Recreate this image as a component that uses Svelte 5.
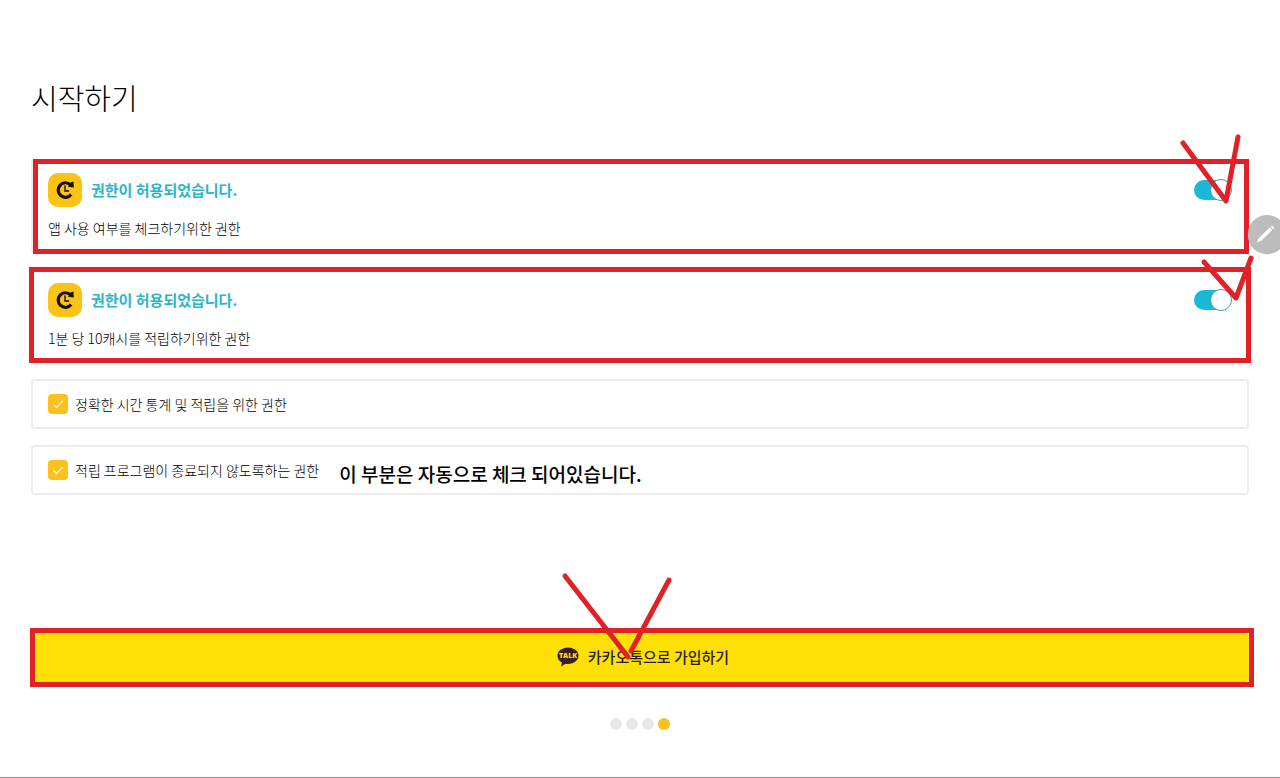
<script>
  let permissions = $state([
    { id: 'usage', text: '앱 사용 여부를 체크하기위한 권한', on: true, tick: 'M4 7 L47 65 L59 1' },
    { id: 'cash', text: '1분 당 10캐시를 적립하기위한 권한', on: true, tick: 'M4 5 L36 41 L51 1' },
  ]);
  let agreements = $state([
    { id: 'stats', text: '정확한 시간 통계 및 적립을 위한 권한', checked: true, note: '' },
    {
      id: 'running',
      text: '적립 프로그램이 종료되지 않도록하는 권한',
      checked: true,
      note: '이 부분은 자동으로 체크 되어있습니다.',
    },
  ]);
  const steps = [1, 2, 3, 4];
  const current = 4;
</script>

<div class="page">
  <main>
    <h1>시작하기</h1>

    {#each permissions as p (p.id)}
      <section class="card permission {p.id}">
        <div class="row">
          <svg class="app-icon" viewBox="0 0 34 34" aria-hidden="true">
            <rect width="34" height="34" rx="10" fill="#fbc316" />
            <path
              d="M22.6 11.8 A7.3 7.3 0 1 0 23.2 21.6"
              fill="none"
              stroke="#160f08"
              stroke-width="3.2"
            />
            <path d="M20 13.8 L25.8 14.4 L25.4 8.4 L22.6 9.4 Z" fill="#160f08" />
            <path d="M17 12.6 V18 H21.2" fill="none" stroke="#160f08" stroke-width="1.4" />
          </svg>
          <label class="status" for={p.id}>권한이 허용되었습니다.</label>
          <input class="switch" type="checkbox" role="switch" id={p.id} bind:checked={p.on} />
        </div>
        <p>{p.text}</p>
        <span class="frame"></span>
        <svg class="tick" aria-hidden="true"><path d={p.tick} /></svg>
      </section>
    {/each}

    {#each agreements as a (a.id)}
      <div class="card agreement">
        <label>
          <input type="checkbox" bind:checked={a.checked} />
          <span>{a.text}</span>
        </label>
        {#if a.note}<strong class="note">{a.note}</strong>{/if}
      </div>
    {/each}

    <div class="join">
      <button type="button" class="kakao">
        <svg class="talk" viewBox="0 0 22 20" aria-hidden="true">
          <path
            d="M11 0.5 C5 0.5 0.5 4.1 0.5 8.7 C0.5 11.6 2.2 14 4.9 15.5 L4 19.6 L8.6 16.7 C9.4 16.8 10.2 16.9 11 16.9 C17 16.9 21.5 13.3 21.5 8.7 C21.5 4.1 17 0.5 11 0.5 Z"
            fill="#3c1e1e"
          />
          <text x="11" y="11" text-anchor="middle">TALK</text>
        </svg>
        카카오톡으로 가입하기
      </button>
      <span class="frame"></span>
      <svg class="tick" aria-hidden="true"><path d="M3 3 L66 84 M69 78 L107 7" /></svg>
    </div>

    <div class="dots">
      {#each steps as s}
        <span class:active={s === current}></span>
      {/each}
    </div>
  </main>

  <button type="button" class="edit" aria-label="편집">
    <svg viewBox="0 0 38 38" aria-hidden="true">
      <path d="M9 27.5 L10.6 23.2 L21.8 12.6 L24.2 15 L13.4 25.6 Z" fill="#fff" />
      <path d="M22.6 11.7 L24 10.4 L26.6 13 L25.2 14.3 Z" fill="#fff" />
    </svg>
  </button>
</div>

<style>
  :global(body) {
    margin: 0;
    background: #fff;
  }
  .page {
    position: relative;
    box-sizing: border-box;
    min-height: 100vh;
    overflow: hidden;
    border-bottom: 1px solid #8c8c8c;
    color: #000;
    font-family: 'Noto Sans CJK KR', sans-serif;
    font-size: 14px;
    font-weight: 300;
  }
  main {
    display: flex;
    flex-direction: column;
    gap: 16px;
    padding: 75px 31px 0;
  }
  h1 {
    margin: 0 0 24px;
    font-size: 29px;
    line-height: 44px;
    font-weight: 300;
  }
  .card {
    position: relative;
    box-sizing: border-box;
    border: 2px solid #ececec;
    border-radius: 4px;
    padding: 0 15px;
  }
  .permission {
    height: 94px;
    padding: 12px 15px;
  }
  .row {
    display: flex;
    align-items: center;
    height: 34px;
  }
  .app-icon {
    width: 34px;
    height: 34px;
    margin-right: 9px;
  }
  .status {
    flex: 1;
    color: #2db4c8;
    font-size: 15px;
    line-height: 20px;
    font-weight: 700;
  }
  .permission p {
    margin: 11px 0 0;
    line-height: 20px;
  }
  .switch {
    appearance: none;
    position: relative;
    width: 38px;
    height: 20px;
    margin: 0;
    border-radius: 10px;
    background: #c8c8c8;
  }
  .switch:checked {
    background: linear-gradient(90deg, #1cb8d8 28px, transparent 28px);
  }
  .switch::after {
    content: '';
    position: absolute;
    box-sizing: border-box;
    top: -1px;
    left: 0;
    width: 22px;
    height: 22px;
    border: 1px solid #3f9db0;
    border-radius: 50%;
    background: #fff;
  }
  .switch:checked::after {
    left: 16px;
  }
  .frame {
    position: absolute;
    border: 5px solid #e02128;
    pointer-events: none;
  }
  .usage .frame {
    inset: -2px -2px -3px 0;
  }
  .cash .frame {
    inset: -4px -4px -2px;
  }
  .tick {
    position: absolute;
    overflow: visible;
    width: 60px;
    height: 66px;
    pointer-events: none;
  }
  .tick path {
    fill: none;
    stroke: #e02128;
    stroke-width: 5;
    stroke-linecap: round;
    stroke-linejoin: round;
  }
  .usage .tick {
    top: -25px;
    right: 8px;
  }
  .cash .tick {
    top: -14px;
    right: -13px;
  }
  .agreement {
    display: flex;
    align-items: center;
    height: 50px;
  }
  .agreement label {
    display: flex;
    align-items: center;
    gap: 7px;
  }
  .agreement input {
    appearance: none;
    width: 20px;
    height: 20px;
    margin: 0;
    border-radius: 4px;
    background: #ddd;
  }
  .agreement input:checked {
    background: #fbc11d
      url("data:image/svg+xml,%3Csvg xmlns='http://www.w3.org/2000/svg' viewBox='0 0 20 20'%3E%3Cpath d='M5.5 10.5l3.2 3 6-6.5' fill='none' stroke='%23fff3c4' stroke-width='1.4'/%3E%3C/svg%3E");
  }
  .note {
    margin: 8px 0 0 20px;
    font-size: 19px;
    line-height: 20px;
    font-weight: 500;
  }
  .join {
    position: relative;
    margin-top: 122px;
  }
  .kakao {
    display: flex;
    align-items: center;
    justify-content: center;
    gap: 9px;
    width: 100%;
    height: 49px;
    padding: 0 0 2px 6px;
    border: 0;
    border-radius: 4px;
    background: #fee102;
    color: #2c1c14;
    font: inherit;
    font-size: 15px;
    font-weight: 500;
  }
  .talk {
    width: 22px;
    height: 20px;
  }
  .talk text {
    fill: #fee102;
    font: 800 7px 'Open Sans', sans-serif;
  }
  .join .frame {
    inset: -5px -5px -5px -1px;
  }
  .join .tick {
    top: -60px;
    left: calc(50% - 78px);
  }
  .dots {
    display: flex;
    justify-content: center;
    gap: 4px;
    margin-top: 20px;
  }
  .dots span {
    width: 12px;
    height: 12px;
    border-radius: 50%;
    background: #e8e8e8;
  }
  .dots .active {
    background: #fbc11d;
  }
  .edit {
    position: absolute;
    top: 215px;
    right: -6px;
    width: 38px;
    height: 38px;
    padding: 0;
    border: 0;
    border-radius: 50%;
    background: #bcbcbc;
    box-shadow: 0 1px 1px #aaa;
  }
  .edit svg {
    display: block;
  }
</style>
